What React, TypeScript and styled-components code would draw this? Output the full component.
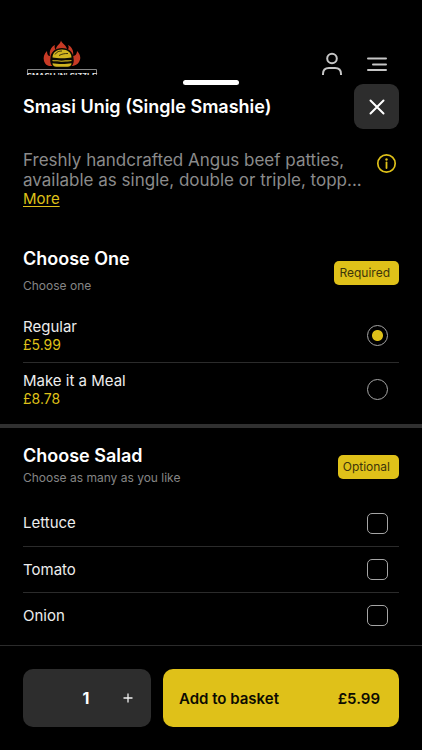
import React, { useState } from "react";
import styled, { createGlobalStyle } from "styled-components";

const yellow = "#dfc119";
const panel = "#2d2d2d";

const GlobalStyle = createGlobalStyle`
  *, *::before, *::after { box-sizing: border-box; }
  body {
    margin: 0;
    background: #000;
    color: #f4f4f4;
    font-family: Inter, "Liberation Sans", sans-serif;
  }
  button, input { font: inherit; color: inherit; margin: 0; }
  h1, h2, p, fieldset { margin: 0; padding: 0; border: 0; min-width: 0; }
`;

const Page = styled.div`
  min-height: 100vh;
  display: flex;
  flex-direction: column;
`;

const Header = styled.header`
  height: 75px;
  padding: 0 34px 0 26px;
  display: flex;
  justify-content: space-between;
  align-items: flex-start;
  overflow: hidden;
`;

const Logo = styled.svg`
  display: block;
  margin-top: 40px;
`;

const HeaderActions = styled.div`
  display: flex;
  gap: 23px;
  margin-top: 51px;
`;

const IconButton = styled.button`
  display: flex;
  padding: 0;
  border: 0;
  background: none;
  color: #c6c6c6;
  cursor: pointer;
`;

const Sheet = styled.main`
  position: relative;
  flex: 1;
  display: flex;
  flex-direction: column;
  padding-top: 9px;
`;

const Handle = styled.div`
  position: absolute;
  top: 5px;
  left: 50%;
  width: 56px;
  height: 5px;
  transform: translateX(-50%);
  border-radius: 3px;
  background: #fff;
`;

const TitleRow = styled.div`
  display: flex;
  align-items: center;
  justify-content: space-between;
  padding: 0 23px;
`;

const Title = styled.h1`
  font-size: 18px;
  line-height: 24px;
  font-weight: 600;
  color: #fff;
`;

const CloseButton = styled.button`
  display: flex;
  align-items: center;
  justify-content: center;
  width: 45px;
  height: 45px;
  padding: 0;
  border: 0;
  border-radius: 9px;
  background: ${panel};
  color: #fff;
  cursor: pointer;
`;

const Intro = styled.div`
  display: flex;
  justify-content: space-between;
  align-items: flex-start;
  padding: 21px 25px 0 23px;
`;

const Description = styled.p`
  font-size: 17px;
  line-height: 20px;
  color: #8b8b8b;
  white-space: nowrap;
`;

const InfoButton = styled(IconButton)`
  margin-top: 3px;
  color: ${yellow};
`;

const MoreLink = styled.a`
  display: block;
  font-size: 15px;
  line-height: 18px;
  color: ${yellow};
  text-decoration: underline;
  text-underline-offset: 2px;
`;

const Group = styled.section<{ $divided?: boolean }>`
  padding: ${(p) => (p.$divided ? "16px 23px 6px" : "39px 23px 8px")};
  border-top: ${(p) => (p.$divided ? "4px solid #303030" : "0")};
`;

const GroupHead = styled.div`
  display: flex;
  align-items: center;
  justify-content: space-between;
`;

const GroupTitle = styled.h2`
  font-size: 18px;
  line-height: 24px;
  font-weight: 600;
  color: #fff;
`;

const GroupHint = styled.p<{ $spaced?: boolean }>`
  margin-top: ${(p) => (p.$spaced ? "7px" : "2px")};
  padding-bottom: 4px;
  font-size: 12px;
  line-height: 16px;
  color: #858585;
`;

const Badge = styled.span`
  padding: 0 9px 0 5px;
  border-radius: 5px;
  background: ${yellow};
  color: #3d350b;
  font-size: 12px;
  line-height: 24px;
`;

const OptionList = styled.fieldset`
  margin-top: 10px;
`;

const Option = styled.label<{ $tall?: boolean }>`
  display: flex;
  align-items: center;
  justify-content: space-between;
  height: ${(p) => (p.$tall ? "54px" : "46px")};
  padding-right: 11px;
  cursor: pointer;
  & + & {
    border-top: 1px solid #2b2b2b;
  }
`;

const OptionText = styled.span`
  display: flex;
  flex-direction: column;
`;

const OptionName = styled.span`
  font-size: 15px;
  line-height: 18px;
  color: #ededed;
`;

const OptionPrice = styled.span`
  font-size: 14px;
  line-height: 17px;
  color: ${yellow};
`;

const Choice = styled.input`
  appearance: none;
  width: 21px;
  height: 21px;
  border: 1px solid #a5a5a5;
  border-radius: ${(p) => (p.type === "radio" ? "50%" : "5px")};
  background: transparent;
  cursor: pointer;
  &:checked {
    background: ${yellow};
    background-clip: content-box;
    padding: 4px;
  }
  &[type="radio"]:checked {
    background: radial-gradient(circle, ${yellow} 5px, transparent 6px);
  }
`;

const Footer = styled.footer`
  display: flex;
  gap: 12px;
  margin-top: auto;
  padding: 23px;
  border-top: 1px solid #2b2b2b;
`;

const Quantity = styled.div`
  display: grid;
  grid-template-columns: 1fr 1fr 1fr;
  align-items: center;
  justify-items: center;
  width: 128px;
  height: 58px;
  padding-right: 2px;
  border-radius: 10px;
  background: ${panel};
`;

const Count = styled.output`
  grid-column: 2;
  font-size: 16px;
  line-height: 20px;
  font-weight: 700;
  color: #fff;
`;

const PlusButton = styled(IconButton)`
  color: #f0f0f0;
`;

const AddButton = styled.button`
  flex: 1;
  display: flex;
  align-items: center;
  justify-content: space-between;
  height: 58px;
  padding: 0 19px 0 16px;
  border: 0;
  border-radius: 10px;
  background: ${yellow};
  color: #0c0b02;
  font-size: 15px;
  font-weight: 600;
  cursor: pointer;
`;

const meals = [
  { name: "Regular", price: 5.99 },
  { name: "Make it a Meal", price: 8.78 },
];
const salads = ["Lettuce", "Tomato", "Onion"];
const pounds = (value: number) => `£${value.toFixed(2)}`;

function BrandLogo() {
  return (
    <Logo width="72" height="44" viewBox="0 0 72 44" role="img" aria-label="Smash 'n' Sizzle">
      <path
        fill="#c73a25"
        d="M35 .5C36 4 41 5 41 10c2-1 2-3 1-5 4 2 6 6 5 11 3 0 4-3 4-5 4 4 4 8 2 11-1 2-4 4-8 4H25c-4 0-6-2-7-5-1-4 0-7 3-10 0 3 1 5 3 5-1-5 1-9 5-11-1 2 0 4 1 5 0-5 4-5 5-9.5z"
      />
      <path
        fill="#0b0a04"
        d="M24.500 18c0-6 5-10 11.500-10s11.500 4 11.500 10c1 5-1 9-5 9.500H29.500c-4-.5-6-4.500-5-9.500z"
      />
      <path fill="#d2b520" d="M26.500 17.500c0-5 4-8 9.500-8s9.500 3 9.500 8c-5 1-14 1-19 0z" />
      <path fill="none" stroke="#161206" strokeWidth=".8" d="M29 14.500c2-3 4-3.500 7-3.500M33 15.500c3-1.500 5-2 9-2" />
      <path fill="none" stroke="#d2b520" strokeWidth="1.100" d="M26.500 20.500c3 .8 5-.5 9 .8 4-1 6 .2 10-.8" />
      <path fill="#d2b520" d="M26.500 23.200c5 1 14 1 19 0 0 2-1.500 3.500-4 3.500H30.500c-2.500 0-4-1.500-4-3.500z" />
      <path fill="none" stroke="#a8a8a8" strokeWidth=".8" d="M1.500 44V29.500h69V44" />
      <text
        x="36"
        y="38"
        textAnchor="middle"
        fontFamily="Liberation Sans, sans-serif"
        fontWeight="700"
        fontSize="8"
        fill="#e4e4e4"
      >
        SMASH 'N' SIZZLE
      </text>
    </Logo>
  );
}

export default function App() {
  const [meal, setMeal] = useState(meals[0]);
  const [count, setCount] = useState(1);

  return (
    <>
      <GlobalStyle />
      <Page>
        <Header>
          <BrandLogo />
          <HeaderActions>
            <IconButton aria-label="Account">
              <svg width="22" height="26" viewBox="0 0 22 26" fill="none" stroke="currentColor" strokeWidth="2">
                <circle cx="11" cy="7.500" r="4.800" />
                <path d="M2 25v-2c0-4 2-6 6-6h6c4 0 6 2 6 6v2" />
              </svg>
            </IconButton>
            <IconButton aria-label="Menu">
              <svg
                width="22"
                height="26"
                viewBox="0 0 22 26"
                fill="none"
                stroke="currentColor"
                strokeWidth="2"
                strokeLinecap="round"
              >
                <path d="M2 7.500h18M7 13.500h13M2 19h18" />
              </svg>
            </IconButton>
          </HeaderActions>
        </Header>
        <Sheet>
          <Handle />
          <TitleRow>
            <Title>Smasi Unig (Single Smashie)</Title>
            <CloseButton aria-label="Close">
              <svg
                width="16"
                height="16"
                viewBox="0 0 16 16"
                fill="none"
                stroke="currentColor"
                strokeWidth="2"
                strokeLinecap="round"
              >
                <path d="M1.500 1.500l13 13M14.500 1.500l-13 13" />
              </svg>
            </CloseButton>
          </TitleRow>
          <Intro>
            <div>
              <Description>
                Freshly handcrafted Angus beef patties,
                <br />
                available as single, double or triple, topp...
              </Description>
              <MoreLink href="#more">More</MoreLink>
            </div>
            <InfoButton aria-label="Product information">
              <svg width="21" height="21" viewBox="0 0 21 21" fill="none" stroke="currentColor">
                <circle cx="10.500" cy="10.500" r="8.700" strokeWidth="1.700" />
                <path d="M10.500 9.500v5.500" strokeWidth="1.800" strokeLinecap="round" />
                <circle cx="10.500" cy="6.500" r="1.200" fill="currentColor" stroke="none" />
              </svg>
            </InfoButton>
          </Intro>

          <Group>
            <GroupHead>
              <div>
                <GroupTitle>Choose One</GroupTitle>
                <GroupHint $spaced>Choose one</GroupHint>
              </div>
              <Badge>Required</Badge>
            </GroupHead>
            <OptionList aria-label="Choose One">
              {meals.map((item) => (
                <Option key={item.name} $tall>
                  <OptionText>
                    <OptionName>{item.name}</OptionName>
                    <OptionPrice>{pounds(item.price)}</OptionPrice>
                  </OptionText>
                  <Choice type="radio" name="meal" checked={meal === item} onChange={() => setMeal(item)} />
                </Option>
              ))}
            </OptionList>
          </Group>

          <Group $divided>
            <GroupHead>
              <div>
                <GroupTitle>Choose Salad</GroupTitle>
                <GroupHint>Choose as many as you like</GroupHint>
              </div>
              <Badge>Optional</Badge>
            </GroupHead>
            <OptionList aria-label="Choose Salad">
              {salads.map((name) => (
                <Option key={name}>
                  <OptionName>{name}</OptionName>
                  <Choice type="checkbox" name={name} />
                </Option>
              ))}
            </OptionList>
          </Group>

          <Footer>
            <Quantity>
              <Count>{count}</Count>
              <PlusButton aria-label="Increase quantity" onClick={() => setCount(count + 1)}>
                <svg width="10" height="10" viewBox="0 0 10 10" stroke="currentColor" strokeWidth="1.300">
                  <path d="M5 .5v9M.5 5h9" />
                </svg>
              </PlusButton>
            </Quantity>
            <AddButton>
              <span>Add to basket</span>
              <span>{pounds(meal.price * count)}</span>
            </AddButton>
          </Footer>
        </Sheet>
      </Page>
    </>
  );
}
